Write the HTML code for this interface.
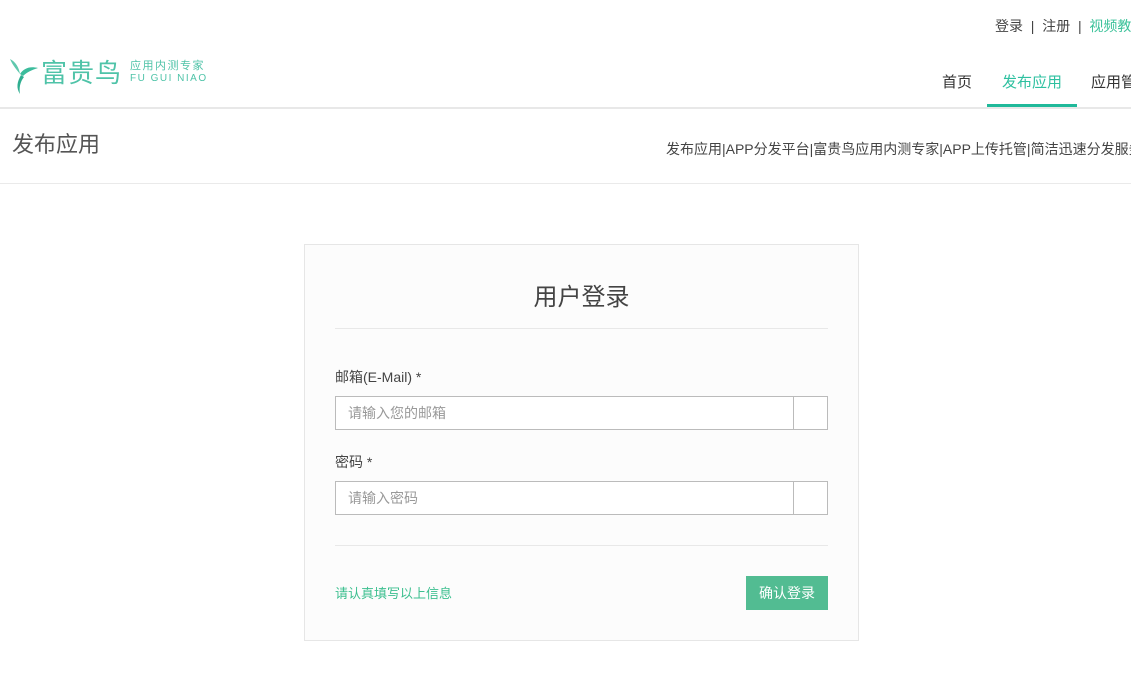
<!DOCTYPE html>
<html><head><meta charset="utf-8"><style>
*{margin:0;padding:0;box-sizing:border-box}
body{width:1131px;height:686px;overflow:hidden;background:#fff;font-family:"Liberation Sans","Noto Sans CJK SC",sans-serif;color:#555;position:relative}
.a{position:absolute;white-space:nowrap;line-height:1}
</style></head><body>
<div class="a" style="left:995px;top:19px;font-size:14px;color:#444">登录 &nbsp;|&nbsp; 注册 &nbsp;|&nbsp; <span style="color:#3cc29a">视频教程</span></div>
<svg class="a" style="left:8px;top:56px" width="32" height="40" viewBox="0 0 32 40">
<path d="M2 3 C8 6 11 12 12 18 C9 14 5 10 2 3Z" fill="#5fc8ad"/>
<path d="M12 18 C16 12 22 10 30 12 C24 14 19 16 15 20Z" fill="#3cbc9c"/>
<path d="M13 19 C9 26 8 32 12 38 C11 32 12 26 16 21Z" fill="#2fae90"/>
</svg>
<div class="a" style="left:41px;top:60px;font-size:26px;color:#4fc3a8;letter-spacing:1px">富贵鸟</div>
<div class="a" style="left:130px;top:61px;font-size:11px;color:#4fc3a8;letter-spacing:1.5px">应用内测专家</div>
<div class="a" style="left:130px;top:74px;font-size:10px;color:#4fc3a8;letter-spacing:1.5px">FU GUI NIAO</div>
<div class="a" style="left:942px;top:75px;font-size:15px;color:#333">首页</div>
<div class="a" style="left:1002px;top:75px;font-size:15px;color:#2ec0a0">发布应用</div>
<div class="a" style="left:1091px;top:75px;font-size:15px;color:#333">应用管理</div>
<div class="a" style="left:987px;top:104px;width:90px;height:3px;background:#20b99a"></div>
<div class="a" style="left:0;top:107px;width:1131px;height:2px;background:#e8e8e8"></div>
<div class="a" style="left:12px;top:134px;font-size:22px;color:#555">发布应用</div>
<div class="a" style="left:666px;top:142px;font-size:14px;color:#444">发布应用|APP分发平台|富贵鸟应用内测专家|APP上传托管|简洁迅速分发服务</div>
<div class="a" style="left:0;top:183px;width:1131px;height:1px;background:#eaeaea"></div>
<div class="a" style="left:304px;top:244px;width:555px;height:397px;background:#fcfcfc;border:1px solid #e6e6e6"></div>
<div class="a" style="left:335px;top:286px;width:493px;text-align:center;font-size:24px;color:#444">用户登录</div>
<div class="a" style="left:335px;top:328px;width:493px;height:1px;background:#e8e8e8"></div>
<div class="a" style="left:335px;top:370px;font-size:14px;color:#444">邮箱(E-Mail) *</div>
<div class="a" style="left:335px;top:396px;width:493px;height:34px;border:1px solid #bbb;background:#fff"></div>
<div class="a" style="left:793px;top:396px;width:1px;height:34px;background:#bbb"></div>
<div class="a" style="left:348px;top:406px;font-size:14px;color:#999">请输入您的邮箱</div>
<div class="a" style="left:335px;top:455px;font-size:14px;color:#444">密码 *</div>
<div class="a" style="left:335px;top:481px;width:493px;height:34px;border:1px solid #bbb;background:#fff"></div>
<div class="a" style="left:793px;top:481px;width:1px;height:34px;background:#bbb"></div>
<div class="a" style="left:348px;top:491px;font-size:14px;color:#999">请输入密码</div>
<div class="a" style="left:335px;top:545px;width:493px;height:1px;background:#e8e8e8"></div>
<div class="a" style="left:335px;top:587px;font-size:13px;color:#3cbf8f">请认真填写以上信息</div>
<div class="a" style="left:746px;top:576px;width:82px;height:34px;background:#52bc92;color:#fff;font-size:14px;text-align:center;line-height:34px">确认登录</div>
</body></html>
